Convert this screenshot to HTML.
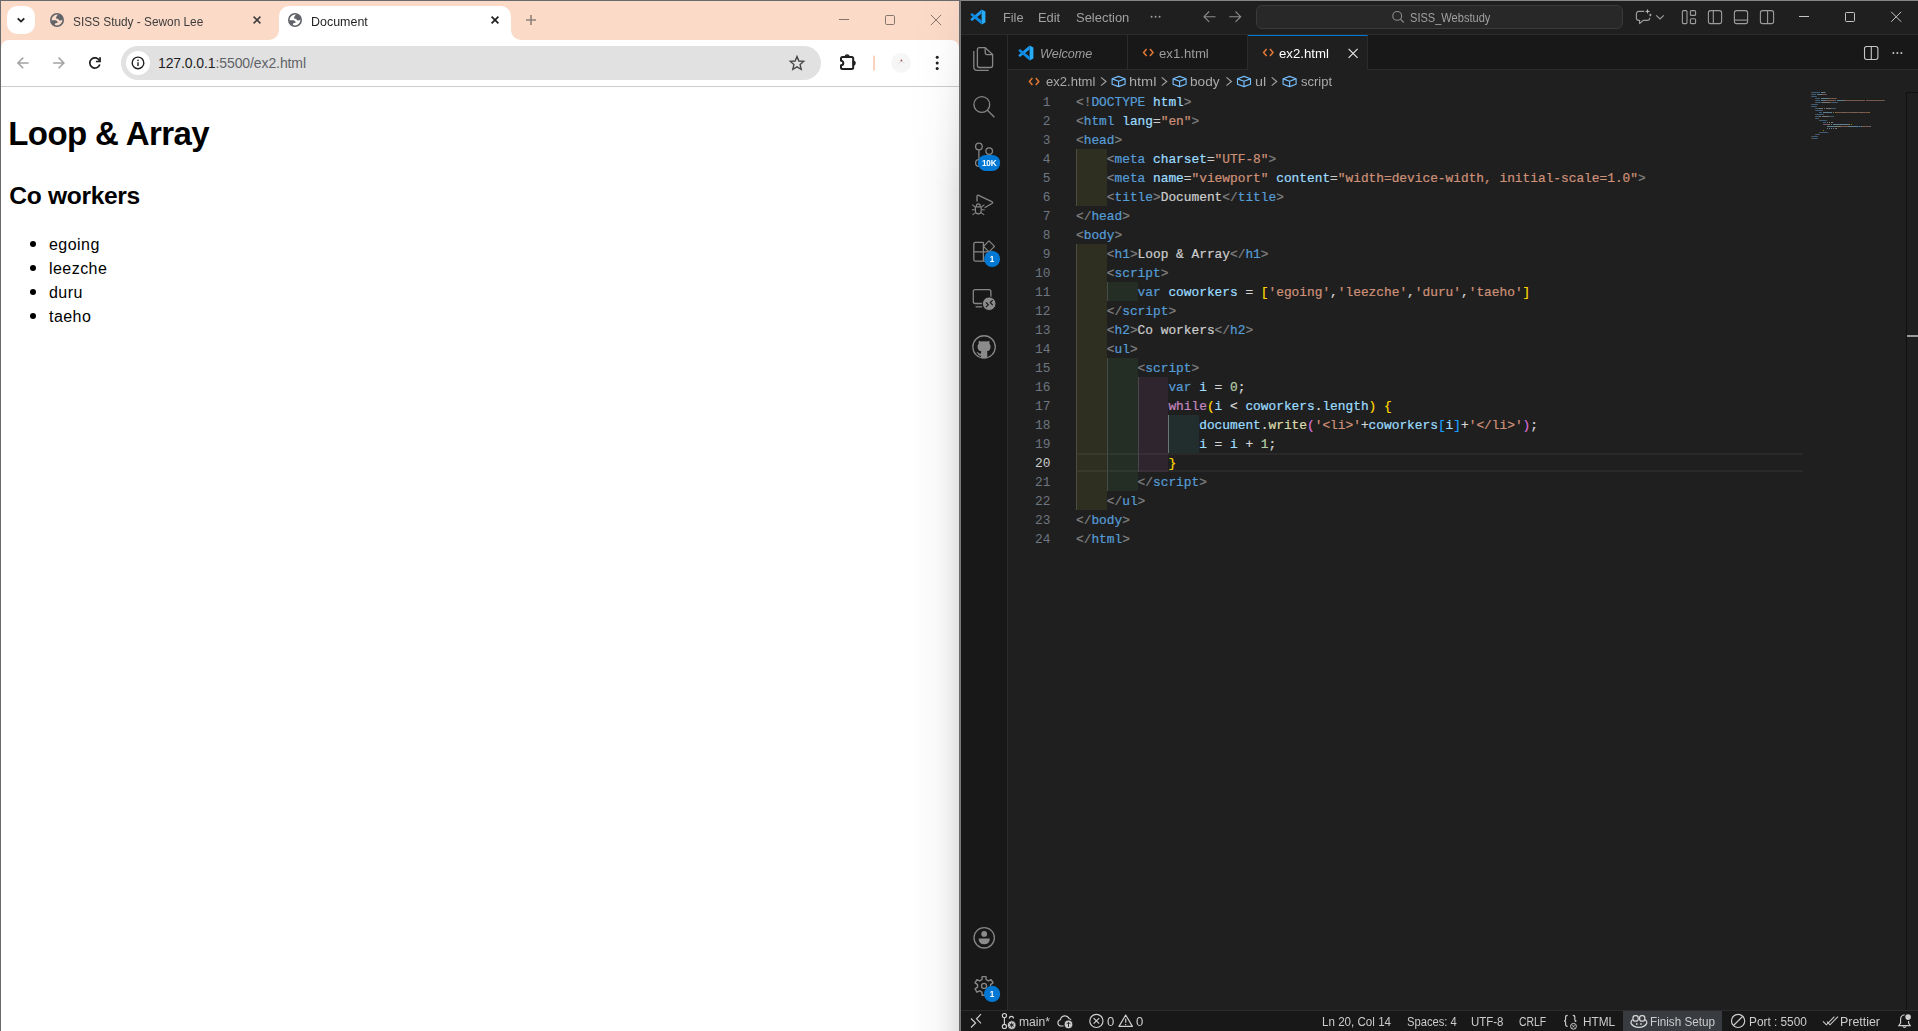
<!DOCTYPE html>
<html lang="en">
<head>
<meta charset="UTF-8">
<title>Document</title>
<style>
html,body{margin:0;padding:0}
body{width:1918px;height:1031px;position:relative;overflow:hidden;background:#1f1f1f;font-family:"Liberation Sans",sans-serif}
*{box-sizing:border-box}
.abs{position:absolute}
svg{position:absolute;overflow:visible}
/* ---------- Chrome window ---------- */
#chrome{position:absolute;left:0;top:0;width:960px;height:1031px;background:#fff;overflow:hidden}
#tabstrip{position:absolute;left:0;top:0;width:960px;height:52px;background:#fbdac8}
#ch-top{position:absolute;left:0;top:0;width:960px;height:1px;background:#676b6e}
#ch-left{position:absolute;left:0;top:0;width:1px;height:1031px;background:#676b6e}
#tabsearch{position:absolute;left:7px;top:6px;width:28px;height:28px;border-radius:10px;background:#fff}
.tabtitle{position:absolute;top:13px;font-size:12px;line-height:16px;color:#3b3b3b;white-space:pre}
#toolbar{position:absolute;left:1px;top:40px;width:958px;height:46px;background:#fff;border-radius:8px 8px 0 0}
#tb-border{position:absolute;left:1px;top:86px;width:959px;height:1px;background:#cccecd}
#omni{position:absolute;left:121px;top:46px;width:700px;height:34px;border-radius:17px;background:#e1e1e1}
#omni-ic{position:absolute;left:125.8px;top:50.8px;width:24px;height:24px;border-radius:12px;background:#fff}
#url{position:absolute;left:158px;top:55.2px;font-size:14px;line-height:17px;color:#5f6368;white-space:pre;letter-spacing:-0.1px}
#url b{font-weight:normal;color:#1f1f1f}
#page{position:absolute;left:1px;top:87px;width:959px;height:944px;background:#fff;color:#000}
#page h1{position:absolute;left:7.3px;top:28.1px;margin:0;font-size:33px;line-height:37px;font-weight:bold;white-space:pre;letter-spacing:-0.6px}
#page h2{position:absolute;left:8.3px;top:94.6px;margin:0;font-size:24.6px;line-height:28px;font-weight:bold;white-space:pre;letter-spacing:-0.33px}
#page ul{position:absolute;left:9px;top:145.7px;margin:0;padding:0 0 0 39px;font-size:16px;line-height:24px;list-style:none;letter-spacing:0.45px}
#page li{position:relative;height:24px;white-space:pre}
#page li:before{content:"";position:absolute;left:-19px;top:8.2px;width:6px;height:6px;border-radius:3px;background:#000}
/* ---------- VS Code window ---------- */
#vs-edge{position:absolute;left:959px;top:0;width:2px;height:1031px;background:linear-gradient(to right,#676b6e 0,#676b6e 1px,#7a7a7a 1px,#7a7a7a 2px)}
#vs-top{position:absolute;left:961px;top:0;width:957px;height:1px;background:#858585}
#vscode{position:absolute;left:961px;top:1px;width:957px;height:1030px;background:#1f1f1f;color:#ccc;font-size:13px}
#titlebar{position:absolute;left:0;top:0;width:957px;height:33px;background:#1f1f1f}
#tb-line{position:absolute;left:0;top:33px;width:957px;height:1px;background:#2b2b2b}
.menu{position:absolute;top:8px;font-size:13px;line-height:16px;color:#9d9d9d;white-space:pre}
#cmdcenter{position:absolute;left:295px;top:4px;width:367px;height:24px;border-radius:6px;background:#282828;border:1px solid #3a3a3a}
#cmdtext{position:absolute;left:449px;top:8px;font-size:12.4px;line-height:16px;color:#9d9d9d;white-space:pre}
#actbar{position:absolute;left:0;top:34px;width:46px;height:975px;background:#181818}
#act-line{position:absolute;left:46px;top:34px;width:1px;height:975px;background:#2b2b2b}
#tabbar{position:absolute;left:47px;top:34px;width:910px;height:35px;background:#181818;border-bottom:1px solid #2b2b2b}
.vtab{position:absolute;top:0;height:35px;width:120px;border-right:1px solid #2b2b2b;font-size:13px;line-height:16px;color:#9d9d9d}
.vtab span{position:absolute;top:10px;white-space:pre}
.vtab.on{background:#1f1f1f;border-top:1px solid #0078d4;color:#fff;height:36px}
#crumbs{position:absolute;left:47px;top:69px;width:910px;height:22px;background:#1f1f1f}
.cr{position:absolute;top:3px;font-size:13px;line-height:16px;color:#a9a9a9;white-space:pre}
#statusbar{position:absolute;left:0;top:1010px;width:957px;height:20px;background:#181818}
#st-line{position:absolute;left:0;top:1009px;width:957px;height:1px;background:#2b2b2b}
.st{position:absolute;top:4px;font-size:12px;line-height:15px;color:#ccc;white-space:pre}
.badge{position:absolute;background:#0078d4;color:#fff;font-size:9px;font-weight:bold;line-height:16px;height:16px;border-radius:8px;text-align:center}
/* ---------- editor ---------- */
#editor{position:absolute;left:0;top:0;width:1918px;height:1031px;pointer-events:none}
.ln{position:absolute;left:1008px;width:42.5px;height:19px;text-align:right;font-family:"Liberation Mono",monospace;font-size:12.83px;line-height:19px;color:#6e7681}
.ln.cur{color:#ccc}
.cl{position:absolute;height:19px;font-family:"Liberation Mono",monospace;font-size:12.83px;line-height:19px;white-space:pre;letter-spacing:0;-webkit-text-stroke:0.22px}
.ib{position:absolute;width:30.8px;height:19px}
.ig{position:absolute;width:1px;height:19px;background:#404040}
.ig.act{background:#6c6c6c}
.curline{position:absolute;left:1076px;width:727px;height:19px;border-top:2px solid #292929;border-bottom:2px solid #292929}
#minimap{position:absolute;left:0;top:0;width:1918px;height:200px;opacity:.5}
#minimap i{position:absolute;height:1.25px}
#ch-shadow{position:absolute;left:909px;top:1px;width:50px;height:1030px;background:linear-gradient(to right,rgba(0,0,0,0) 0%,rgba(0,0,0,0.02) 50%,rgba(0,0,0,0.052) 75%,rgba(0,0,0,0.115) 100%);-webkit-mask-image:linear-gradient(to bottom,rgba(0,0,0,0.15) 0,rgba(0,0,0,0.3) 40px,rgba(0,0,0,1) 190px);mask-image:linear-gradient(to bottom,rgba(0,0,0,0.15) 0,rgba(0,0,0,0.3) 40px,rgba(0,0,0,1) 190px)}
.tx{position:absolute;white-space:pre;line-height:16px;transform-origin:0 50%;font-family:"Liberation Sans",sans-serif}
#finish{position:absolute;left:662px;top:0;width:99px;height:20px;background:#383b40}
.badgetx{position:absolute;height:16px;line-height:16px;text-align:center;color:#fff;font-size:9.3px;font-weight:bold;font-family:"Liberation Sans",sans-serif;letter-spacing:-0.2px;transform:scaleX(0.88)}
#vscroll{position:absolute;left:945px;top:91px;width:12px;height:918px;border-left:1px solid #111;border-top:1px solid #111}
#vmark{position:absolute;left:946px;top:334px;width:11px;height:2px;background:#9a9a9a}

</style>
</head>
<body>
<div id="chrome">
<div id="tabstrip"></div>
<div id="tabsearch"></div>
<div id="toolbar"></div>
<div id="tb-border"></div>
<div id="omni"></div>
<div id="omni-ic"></div>
<div id="url"><b>127.0.0.1</b>:5500/ex2.html</div>
<div id="page">
<h1>Loop &amp; Array</h1>
<h2>Co workers</h2>
<ul><li>egoing</li><li>leezche</li><li>duru</li><li>taeho</li></ul>
</div>
<svg id="chrome-ic" style="left:0;top:0" width="960" height="90" viewBox="0 0 960 90" fill="none">
<defs>
<g id="globe">
<circle cx="0" cy="0" r="6.2" stroke="#5f6368" stroke-width="1.6"/>
<path fill="#5f6368" d="M0.97,-5.51 L-0.5,-3.4 Q-1.2,-2.4 -0.8,-1.6 Q-0.3,-1 1.1,-1.2 Q1.7,0.4 3,0.5 Q4.6,0.4 5.58,-0.49 A5.6,5.6 0 0 0 0.97,-5.51 Z"/>
<path fill="#5f6368" d="M-5.6,0.2 L-1.6,0.2 Q0.4,0.6 0.7,2.2 Q0.5,3.1 -1.2,3.1 Q-2,3.3 -2.2,5.15 A5.6,5.6 0 0 1 -5.6,0.2 Z"/>
</g>
</defs>
<!-- active tab shape -->
<path d="M269,40 A10,10 0 0 0 279,30 L279,16 A10,10 0 0 1 289,6 L501,6 A10,10 0 0 1 511,16 L511,30 A10,10 0 0 0 521,40 Z" fill="#fff"/>
<!-- tab search chevron -->
<path d="M17.7,18.3 L21,21.6 L24.3,18.3" stroke="#1f1f1f" stroke-width="1.8"/>
<!-- favicons -->
<use href="#globe" x="57" y="20"/>
<use href="#globe" x="295" y="20"/>
<!-- tab close buttons -->
<path d="M253.6,16.6 L260.4,23.4 M260.4,16.6 L253.6,23.4" stroke="#3a3a3a" stroke-width="1.5"/>
<path d="M491.6,16.6 L498.4,23.4 M498.4,16.6 L491.6,23.4" stroke="#1f1f1f" stroke-width="1.7"/>
<!-- new tab -->
<path d="M526,20 L536,20 M531,15 L531,25" stroke="#8f817a" stroke-width="1.6"/>
<!-- window controls -->
<path d="M839,19.5 L849,19.5" stroke="#84766f" stroke-width="1"/>
<rect x="885.5" y="15.5" width="9" height="9" rx="1.2" stroke="#84766f" stroke-width="1"/>
<path d="M930.8,14.8 L941.2,25.2 M941.2,14.8 L930.8,25.2" stroke="#84766f" stroke-width="1"/>
<!-- back / forward -->
<path d="M28.6,62.9 L18,62.9 M23.2,57.6 L17.9,62.9 L23.2,68.2" stroke="#a3a3a3" stroke-width="1.5"/>
<path d="M53.2,62.9 L63.8,62.9 M58.6,57.6 L63.9,62.9 L58.6,68.2" stroke="#a3a3a3" stroke-width="1.5"/>
<!-- reload -->
<path d="M99.52,60.74 A5.1,5.1 0 1 0 99.78,64.39" stroke="#1f1f1f" stroke-width="1.7"/>
<path d="M100.05,57.2 L100.05,61.5 L95.9,61.5" stroke="#1f1f1f" stroke-width="1.7"/>
<!-- info icon -->
<circle cx="138" cy="62.9" r="5.8" stroke="#1f1f1f" stroke-width="1.4"/>
<path d="M138,62.2 L138,65.9" stroke="#1f1f1f" stroke-width="1.4"/>
<circle cx="138" cy="60.3" r="0.85" fill="#1f1f1f"/>
<!-- star -->
<path d="M797,56.6 L798.9,61 L803.7,61.4 L800.1,64.6 L801.2,69.3 L797,66.8 L792.8,69.3 L793.9,64.6 L790.3,61.4 L795.1,61 Z" stroke="#474747" stroke-width="1.4" stroke-linejoin="miter"/>
<!-- extensions puzzle -->
<path d="M842.5,56.9 L851.7,56.9 Q853.2,56.9 853.2,58.4 L853.2,67.4 Q853.2,68.9 851.7,68.9 L842.5,68.9 Q841,68.9 841,67.4 L841,65.3 A2.3,2.3 0 0 0 841,60.7 L841,58.4 Q841,56.9 842.5,56.9 Z" stroke="#1f1f1f" stroke-width="2" stroke-linejoin="round"/>
<path d="M845.2,56.9 A1.95,1.95 0 0 1 849.1,56.9 Z M853.2,61.1 A1.95,1.95 0 0 1 853.2,65 Z" fill="#1f1f1f" stroke="#1f1f1f" stroke-width="1.2"/>
<!-- separator -->
<rect x="873" y="55.4" width="2" height="15.4" rx="1" fill="#fbd3bd"/>
<!-- avatar -->
<circle cx="901" cy="63" r="10" fill="#f6f6f6"/>
<path d="M898.3,64.6 L901.3,61 L904.6,63.3" stroke="#c9c2c2" stroke-width="0.5"/>
<circle cx="901.4" cy="60.4" r="0.9" fill="#a05050"/>
<!-- menu dots -->
<circle cx="937.2" cy="57.3" r="1.5" fill="#1f1f1f"/>
<circle cx="937.2" cy="63" r="1.5" fill="#1f1f1f"/>
<circle cx="937.2" cy="68.6" r="1.5" fill="#1f1f1f"/>
</svg>
<div id="ch-shadow"></div>
<div id="ch-top"></div>
<div id="ch-left"></div>
</div>
<div id="vs-edge"></div>
<div id="vs-top"></div>
<div id="vscode">
<div id="titlebar"><div id="cmdcenter"></div></div>
<div id="tb-line"></div>
<div id="actbar"></div>
<div id="act-line"></div>
<div id="tabbar">
<div class="vtab" style="left:0"></div>
<div class="vtab" style="left:120px"></div>
<div class="vtab on" style="left:240px"></div>
</div>
<div id="crumbs"></div>
<div id="vscroll"></div>
<div id="vmark"></div>
<div id="st-line"></div>
<div id="statusbar"><div id="finish"></div></div>
</div>
<svg id="vs-ic" style="left:0;top:0" width="1918" height="1031" viewBox="0 0 1918 1031" fill="none">
<defs>
<g id="vslogo">
<path d="M11.6,0.6 L15.4,2.4 L15.4,13.6 L11.6,15.4 Z" fill="#27adf6"/>
<path d="M11.6,0.6 L11.6,4.4 L2,11.9 L0.5,10.7 L0.5,9.9 Z" fill="#1b9af0"/>
<path d="M11.6,15.4 L11.6,11.6 L2,4.1 L0.5,5.3 L0.5,6.1 Z" fill="#0c8ae2"/>
</g>
<g id="htmlic" stroke="#e37933" stroke-width="1.5" stroke-linejoin="miter">
<path d="M3.6,0.6 L0.6,4.1 L3.6,7.6"/><path d="M7,0.6 L10,4.1 L7,7.6"/>
</g>
<g id="cube" stroke="#75beff" stroke-width="1.15" stroke-linejoin="round">
<path d="M0.7,3.2 L7.2,0.8 L13.7,3.2 L13.7,8.6 L7.2,11 L0.7,8.6 Z"/>
<path d="M0.9,3.3 L7.2,5.6 L13.5,3.3 M7.2,5.6 L7.2,10.8"/>
</g>
<g id="chev" stroke="#a0a0a0" stroke-width="1.2"><path d="M0.6,0.5 L5.6,4.6 L0.6,8.7"/></g>
</defs>
<!-- title bar -->
<use href="#vslogo" x="970" y="9"/>
<circle cx="1151.6" cy="16.7" r="0.95" fill="#a0a0a0"/><circle cx="1155.6" cy="16.7" r="0.95" fill="#a0a0a0"/><circle cx="1159.6" cy="16.7" r="0.95" fill="#a0a0a0"/>
<path d="M1215.5,16.7 L1204,16.7 M1209.2,11.5 L1204,16.7 L1209.2,21.9" stroke="#8c8c8c" stroke-width="1.1"/>
<path d="M1229.2,16.7 L1240.7,16.7 M1235.5,11.5 L1240.7,16.7 L1235.5,21.9" stroke="#8c8c8c" stroke-width="1.1"/>
<circle cx="1397.2" cy="15.9" r="4.4" stroke="#8c8c8c" stroke-width="1.1"/><path d="M1400.4,19.1 L1403.8,22.5" stroke="#8c8c8c" stroke-width="1.1"/>
<!-- chat icon -->
<path d="M1644.2,11.4 L1638.6,11.4 A2.2,2.2 0 0 0 1636.4,13.6 L1636.4,18.2 A2.2,2.2 0 0 0 1638.6,20.4 L1639.6,20.4 L1639.6,23.6 L1643.2,20.4 L1647.4,20.4 A2.2,2.2 0 0 0 1649.6,18.2 L1649.6,17.8" stroke="#9d9d9d" stroke-width="1.15" stroke-linejoin="round"/>
<path d="M1647.5,8.7 L1648.2,10.7 L1650.2,11.4 L1648.2,12.1 L1647.5,14.1 L1646.8,12.1 L1644.8,11.4 L1646.8,10.7 Z" fill="#bdbdbd"/>
<path d="M1650.3,13.3 L1650.8,14.5 L1652,15 L1650.8,15.5 L1650.3,16.7 L1649.8,15.5 L1648.6,15 L1649.8,14.5 Z" fill="#bdbdbd"/>
<path d="M1656.2,15.3 L1660,19 L1663.8,15.3" stroke="#9d9d9d" stroke-width="1.1"/>
<!-- layout icons -->
<g stroke="#9d9d9d" stroke-width="1.1">
<rect x="1682.4" y="10.6" width="4.6" height="13" rx="1"/><rect x="1690.4" y="10.6" width="5.2" height="4.8" rx="1"/><rect x="1690.4" y="18.8" width="5.2" height="4.8" rx="1"/>
<rect x="1708.4" y="10.6" width="13.2" height="13" rx="2.2"/><path d="M1713.3,10.6 L1713.3,23.6"/>
<rect x="1734.4" y="10.6" width="13.2" height="13" rx="2.2"/><path d="M1734.4,20.1 L1747.6,20.1"/>
<rect x="1760.4" y="10.6" width="13.2" height="13" rx="2.2"/><path d="M1767.6,10.6 L1767.6,23.6"/>
</g>
<!-- window controls -->
<path d="M1799,16.5 L1809,16.5" stroke="#c4c4c4" stroke-width="1"/>
<rect x="1845.5" y="12.5" width="9" height="9" rx="0.8" stroke="#c4c4c4" stroke-width="1"/>
<path d="M1891.2,11.8 L1901.2,21.8 M1901.2,11.8 L1891.2,21.8" stroke="#c4c4c4" stroke-width="1"/>
<!-- tabs -->
<use href="#vslogo" x="1018" y="45"/>
<use href="#htmlic" x="1143" y="48.3"/>
<use href="#htmlic" x="1263" y="48.3"/>
<path d="M1348.6,48.8 L1357.6,57.8 M1357.6,48.8 L1348.6,57.8" stroke="#e4e4e4" stroke-width="1.2"/>
<g stroke="#c8c8c8" stroke-width="1.1"><rect x="1864.5" y="46.5" width="13.4" height="13" rx="2.2"/><path d="M1871.3,46.5 L1871.3,59.5"/></g>
<circle cx="1893.4" cy="52.9" r="1" fill="#c8c8c8"/><circle cx="1897.4" cy="52.9" r="1" fill="#c8c8c8"/><circle cx="1901.4" cy="52.9" r="1" fill="#c8c8c8"/>
<!-- breadcrumbs -->
<use href="#htmlic" x="1028.8" y="77.3"/>
<use href="#chev" x="1100.4" y="76.9"/><use href="#cube" x="1111.4" y="75.6"/>
<use href="#chev" x="1161.1" y="76.9"/><use href="#cube" x="1172.4" y="75.6"/>
<use href="#chev" x="1225.8" y="76.9"/><use href="#cube" x="1236.8" y="75.6"/>
<use href="#chev" x="1271.1" y="76.9"/><use href="#cube" x="1282.4" y="75.6"/>
<!-- activity bar -->
<g stroke="#868686" stroke-width="1.3" stroke-linejoin="round">
<path d="M979.4,47.7 L985.2,47.7 L992.6,54.6 L992.6,65.5 A2,2 0 0 1 990.6,67.5 L979.4,67.5 A2,2 0 0 1 977.4,65.5 L977.4,49.7 A2,2 0 0 1 979.4,47.7 Z"/>
<path d="M985.2,47.7 L985.2,52.6 A2,2 0 0 0 987.2,54.6 L992.6,54.6"/>
<path d="M973.8,51 L973.8,67 A3.3,3.3 0 0 0 977.1,70.3 L988.8,70.3"/>
<circle cx="981.8" cy="104.5" r="7.9"/><path d="M987.4,110.3 L994.4,117.2"/>
<circle cx="978.9" cy="146.5" r="3.3"/><circle cx="989.2" cy="151.1" r="3.3"/><circle cx="978.9" cy="163" r="3.3"/>
<path d="M978.9,149.8 L978.9,159.7"/><path d="M989.2,154.4 Q989.2,158.8 983.6,159.4 Q980,159.8 979.4,159.8"/>
<!-- debug -->
<path d="M977,201.5 L977,196.3 Q977,194.6 978.6,195.3 L991.8,201.6 Q993.4,202.5 992,203.5 L984.6,207.8"/>
<path d="M975.4,206.9 L981.2,206.9 L981.2,210.6 A2.9,3.3 0 0 1 975.4,210.6 Z" stroke-width="1.2"/>
<path d="M976.3,206.4 A2,2.5 0 0 1 980.3,206.4" stroke-width="1.2"/>
<path d="M975.2,207.2 L972.2,204.6 M975,209.8 L971.9,209.8 M975.6,212.6 L972.4,214.9 M981.4,207.2 L984.4,204.6 M981.6,209.8 L984.7,209.8 M981,212.6 L984.2,214.9" stroke-width="1.1"/>
<!-- extensions -->
<path d="M983.4,242.3 L975.4,242.3 A1.6,1.6 0 0 0 973.8,243.9 L973.8,259.6 A1.6,1.6 0 0 0 975.4,261.2 L991.4,261.2 A1.6,1.6 0 0 0 993,259.6 L993,251.8 L973.8,251.8 M983.4,242.3 L983.4,261.2"/>
<path d="M989,240.9 L994.5,246.4 L989,251.9 L983.5,246.4 Z"/>
<!-- remote explorer -->
<path d="M982.5,303.5 L975.2,303.5 A1.9,1.9 0 0 1 973.3,301.6 L973.3,291.6 A1.9,1.9 0 0 1 975.2,289.7 L989,289.7 A1.9,1.9 0 0 1 990.9,291.6 L990.9,297"/>
<path d="M975.6,306.8 L982.2,306.8"/>
<!-- github ring -->
<circle cx="984.05" cy="346.95" r="11.2"/>
<!-- account -->
<circle cx="984.2" cy="937.8" r="10.2"/>
<!-- gear -->
<path d="M986.19,979.66 L985.94,976.59 L982.16,976.59 L981.91,979.66 L979.71,980.93 L976.93,979.61 L975.04,982.88 L977.57,984.63 L977.57,987.17 L975.04,988.92 L976.93,992.19 L979.71,990.87 L981.91,992.14 L982.16,995.21 L985.94,995.21 L986.19,992.14 L988.39,990.87 L991.17,992.19 L993.06,988.92 L990.53,987.17 L990.53,984.63 L993.06,982.88 L991.17,979.61 L988.39,980.93 Z" stroke-width="1.4"/>
<circle cx="984.05" cy="985.9" r="2.5" stroke-width="1.3"/>
</g>
<!-- remote explorer overlay -->
<circle cx="989.2" cy="303.7" r="6.8" fill="#8b8b8b" stroke="#181818" stroke-width="1"/>
<path d="M985.9,302.4 L988.3,304.8 L985.9,307.2 M992.7,300.2 L990.3,302.6 L992.7,305" stroke="#181818" stroke-width="1.2"/>
<!-- github cat -->
<g fill="#8b8b8b">
<path d="M978.9,340.7 L981,341.6 Q984.05,340.9 987.1,341.6 L989.2,340.7 Q989.7,342.4 989.4,343.4 Q990.8,344.9 990.6,347 Q990.2,350.9 986.9,351.3 Q987.3,352 987.3,353 L987.3,357.6 Q984,358.6 980.9,357.6 L980.9,355.6 Q978.4,356 977.6,353.6 Q977.2,352.6 976.4,352 Q977.4,351.6 978.2,352.6 Q979.2,354.2 980.9,353.6 Q981,352 981.3,351.3 Q977.9,350.9 977.5,347 Q977.3,344.9 978.7,343.4 Q978.4,342.4 978.9,340.7 Z"/>
<!-- account person -->
<circle cx="984.2" cy="933.9" r="2.9"/>
<path d="M978.6,938.4 L989.8,938.4 Q989.8,944.2 984.2,944.2 Q978.6,944.2 978.6,938.4 Z"/>
</g>
<!-- badges -->
<rect x="977.9" y="155" width="22.3" height="16" rx="8" fill="#0078d4"/>
<circle cx="992.1" cy="259" r="8" fill="#0078d4"/>
<circle cx="992.1" cy="993.9" r="8.1" fill="#0078d4"/>
<!-- status bar icons -->
<g stroke="#d0d0d0" stroke-width="1.15">
<path d="M971,1018.5 L975.6,1023 L971,1027.5 M981,1014.2 L976.5,1018.8 L981,1023.4"/>
<circle cx="1004.4" cy="1015.6" r="2.1"/><circle cx="1004.4" cy="1026.4" r="2.1"/><path d="M1004.4,1017.7 L1004.4,1024.3"/>
<path d="M1009.3,1018.4 A2.1,2.1 0 1 1 1013.5,1018.4"/>
<!-- cloud -->
<path d="M1063.6,1026 L1060.8,1026 A3.2,3.2 0 0 1 1060.4,1019.7 A4.6,4.6 0 0 1 1069.2,1018.8 Q1070.4,1019 1071.2,1019.8"/>
<!-- error -->
<circle cx="1096.4" cy="1020.9" r="6.6"/><path d="M1093.6,1018.1 L1099.2,1023.7 M1099.2,1018.1 L1093.6,1023.7"/>
<!-- warning -->
<path d="M1125.7,1015 L1132.4,1026.4 L1119,1026.4 Z" stroke-linejoin="round"/><path d="M1125.7,1018.8 L1125.7,1022.8 M1125.7,1023.9 L1125.7,1025.1"/>
<!-- braces -->
<path d="M1567.6,1015.4 Q1565.6,1015.4 1565.6,1017.2 L1565.6,1019.4 Q1565.6,1020.9 1564,1020.9 Q1565.6,1020.9 1565.6,1022.4 L1565.6,1024.6 Q1565.6,1026.4 1567.6,1026.4"/>
<path d="M1572.8,1015.4 Q1574.8,1015.4 1574.8,1017.2 L1574.8,1019.4 Q1574.8,1020.9 1576.4,1020.9 Q1575.4,1020.9 1575,1021.6"/>
<!-- no-entry -->
<circle cx="1738.1" cy="1020.9" r="6.6"/><path d="M1733.5,1025.5 L1742.7,1016.3"/>
<!-- double check -->
<path d="M1823,1021.4 L1826.4,1024.8 L1834.4,1016.6 M1827,1021.6 L1830,1024.8 L1838,1016.6" stroke-width="1.05"/>
<!-- bell -->
<path d="M1904.6,1014.8 A4.2,4.2 0 0 0 1900.6,1019 L1900.6,1023 L1898.8,1025.6 L1910.2,1025.6 L1908.6,1023 L1908.6,1021"/>
<path d="M1903,1026.4 A1.6,1.6 0 0 0 1906,1026.4"/>
</g>
<circle cx="1011.7" cy="1025.1" r="4.3" fill="#d0d0d0" stroke="#181818" stroke-width="0.8"/>
<path d="M1011.7,1022.6 L1011.7,1027.6 M1009.5,1023.8 L1013.9,1026.4 M1013.9,1023.8 L1009.5,1026.4" stroke="#181818" stroke-width="0.9"/>
<circle cx="1068.5" cy="1024.4" r="4.3" fill="#d0d0d0" stroke="#181818" stroke-width="0.8"/>
<path d="M1068.5,1027 L1068.5,1022.4 M1066.5,1024.2 L1068.5,1022.2 L1070.5,1024.2" stroke="#181818" stroke-width="0.9"/>
<circle cx="1573.5" cy="1026.3" r="2.9" fill="#181818" stroke="#d0d0d0" stroke-width="1"/>
<path d="M1572.3,1025.1 L1574.7,1027.5 M1574.7,1025.1 L1572.3,1027.5" stroke="#d0d0d0" stroke-width="0.8"/>
<circle cx="1908.1" cy="1017.1" r="2.8" fill="#d0d0d0"/>
<!-- copilot -->
<g stroke="#d8d8d8" stroke-width="1.2">
<rect x="1633" y="1015.6" width="5.2" height="5.6" rx="2.2"/><rect x="1639.6" y="1015.6" width="5.2" height="5.6" rx="2.2"/>
<path d="M1632.6,1019.6 Q1630.6,1021 1631,1023.4 Q1633.4,1027.4 1638.9,1027.4 Q1644.4,1027.4 1646.8,1023.4 Q1647.2,1021 1645.2,1019.6"/>
<path d="M1636.8,1023 L1636.8,1025 M1641,1023 L1641,1025"/>
</g>
</svg>
<div class="badgetx" style="left:977.9px;top:155px;width:22.3px">10K</div>
<div class="badgetx" style="left:984.1px;top:251px;width:16px">1</div>
<div class="badgetx" style="left:984.1px;top:985.9px;width:16px">1</div>
<div class="tx" style="left:72.81px;top:14px;font-size:12px;color:#3c3c3c;transform:scaleX(0.9863);">SISS Study - Sewon Lee</div>
<div class="tx" style="left:310.66px;top:14px;font-size:12px;color:#1f1f1f;transform:scaleX(1.0381);">Document</div>
<div class="tx" style="left:1002.52px;top:10px;font-size:13px;color:#a0a0a0;transform:scaleX(0.9795);">File</div>
<div class="tx" style="left:1037.71px;top:10px;font-size:13px;color:#a0a0a0;transform:scaleX(0.9907);">Edit</div>
<div class="tx" style="left:1076.00px;top:10px;font-size:13px;color:#a0a0a0;transform:scaleX(0.9971);">Selection</div>
<div class="tx" style="left:1410.44px;top:10px;font-size:12px;color:#a0a0a0;transform:scaleX(0.9222);">SISS_Webstudy</div>
<div class="tx" style="left:1039.63px;top:46px;font-size:13px;color:#9d9d9d;transform:scaleX(0.9695);font-style:italic">Welcome</div>
<div class="tx" style="left:1159.49px;top:46px;font-size:13px;color:#9d9d9d;transform:scaleX(1.0136);">ex1.html</div>
<div class="tx" style="left:1279.49px;top:46px;font-size:13px;color:#ffffff;transform:scaleX(1.0157);">ex2.html</div>
<div class="tx" style="left:1045.50px;top:74px;font-size:13px;color:#a9a9a9;transform:scaleX(1.0052);">ex2.html</div>
<div class="tx" style="left:1128.96px;top:74px;font-size:13px;color:#a9a9a9;transform:scaleX(1.1174);">html</div>
<div class="tx" style="left:1190.41px;top:74px;font-size:13px;color:#a9a9a9;transform:scaleX(1.0473);">body</div>
<div class="tx" style="left:1254.77px;top:74px;font-size:13px;color:#a9a9a9;transform:scaleX(1.1059);">ul</div>
<div class="tx" style="left:1300.95px;top:74px;font-size:13px;color:#a9a9a9;transform:scaleX(0.9984);">script</div>
<div class="tx" style="left:1019.24px;top:1014px;font-size:12px;color:#cccccc;transform:scaleX(1.0084);">main*</div>
<div class="tx" style="left:1107.05px;top:1014px;font-size:12px;color:#cccccc;transform:scaleX(1.0957);">0</div>
<div class="tx" style="left:1136.45px;top:1014px;font-size:12px;color:#cccccc;transform:scaleX(1.0957);">0</div>
<div class="tx" style="left:1322.33px;top:1014px;font-size:12px;color:#cccccc;transform:scaleX(0.9671);">Ln 20, Col 14</div>
<div class="tx" style="left:1406.53px;top:1014px;font-size:12px;color:#cccccc;transform:scaleX(0.9333);">Spaces: 4</div>
<div class="tx" style="left:1471.28px;top:1014px;font-size:12px;color:#cccccc;transform:scaleX(0.9557);">UTF-8</div>
<div class="tx" style="left:1518.57px;top:1014px;font-size:12px;color:#cccccc;transform:scaleX(0.8689);">CRLF</div>
<div class="tx" style="left:1582.52px;top:1014px;font-size:12px;color:#cccccc;transform:scaleX(0.9841);">HTML</div>
<div class="tx" style="left:1649.53px;top:1014px;font-size:12px;color:#cccccc;transform:scaleX(0.9732);">Finish Setup</div>
<div class="tx" style="left:1748.51px;top:1014px;font-size:12px;color:#cccccc;transform:scaleX(0.9852);">Port : 5500</div>
<div class="tx" style="left:1840.27px;top:1014px;font-size:12px;color:#cccccc;transform:scaleX(1.0320);">Prettier</div>
<div id="editor">
<div class="curline" style="top:453px"></div>
<i class="ig" style="left:1076px;top:149px"></i><i class="ig" style="left:1076px;top:168px"></i><i class="ig" style="left:1076px;top:187px"></i><i class="ig" style="left:1076px;top:244px"></i><i class="ig" style="left:1076px;top:263px"></i><i class="ig" style="left:1076px;top:282px"></i><i class="ig" style="left:1107px;top:282px"></i><i class="ig" style="left:1076px;top:301px"></i><i class="ig" style="left:1076px;top:320px"></i><i class="ig" style="left:1076px;top:339px"></i><i class="ig" style="left:1076px;top:358px"></i><i class="ig" style="left:1107px;top:358px"></i><i class="ig" style="left:1076px;top:377px"></i><i class="ig" style="left:1107px;top:377px"></i><i class="ig" style="left:1138px;top:377px"></i><i class="ig" style="left:1076px;top:396px"></i><i class="ig" style="left:1107px;top:396px"></i><i class="ig" style="left:1138px;top:396px"></i><i class="ig" style="left:1076px;top:415px"></i><i class="ig" style="left:1107px;top:415px"></i><i class="ig" style="left:1138px;top:415px"></i><i class="ig act" style="left:1168px;top:415px"></i><i class="ig" style="left:1076px;top:434px"></i><i class="ig" style="left:1107px;top:434px"></i><i class="ig" style="left:1138px;top:434px"></i><i class="ig act" style="left:1168px;top:434px"></i><i class="ig" style="left:1076px;top:453px"></i><i class="ig" style="left:1107px;top:453px"></i><i class="ig" style="left:1138px;top:453px"></i><i class="ig" style="left:1076px;top:472px"></i><i class="ig" style="left:1107px;top:472px"></i><i class="ig" style="left:1076px;top:491px"></i>
<i class="ib" style="left:1076.0px;top:149px;background:rgba(255,255,64,0.07)"></i><i class="ib" style="left:1076.0px;top:168px;background:rgba(255,255,64,0.07)"></i><i class="ib" style="left:1076.0px;top:187px;background:rgba(255,255,64,0.07)"></i><i class="ib" style="left:1076.0px;top:244px;background:rgba(255,255,64,0.07)"></i><i class="ib" style="left:1076.0px;top:263px;background:rgba(255,255,64,0.07)"></i><i class="ib" style="left:1076.0px;top:282px;background:rgba(255,255,64,0.07)"></i><i class="ib" style="left:1106.8px;top:282px;background:rgba(127,255,127,0.07)"></i><i class="ib" style="left:1076.0px;top:301px;background:rgba(255,255,64,0.07)"></i><i class="ib" style="left:1076.0px;top:320px;background:rgba(255,255,64,0.07)"></i><i class="ib" style="left:1076.0px;top:339px;background:rgba(255,255,64,0.07)"></i><i class="ib" style="left:1076.0px;top:358px;background:rgba(255,255,64,0.07)"></i><i class="ib" style="left:1106.8px;top:358px;background:rgba(127,255,127,0.07)"></i><i class="ib" style="left:1076.0px;top:377px;background:rgba(255,255,64,0.07)"></i><i class="ib" style="left:1106.8px;top:377px;background:rgba(127,255,127,0.07)"></i><i class="ib" style="left:1137.6px;top:377px;background:rgba(255,127,255,0.07)"></i><i class="ib" style="left:1076.0px;top:396px;background:rgba(255,255,64,0.07)"></i><i class="ib" style="left:1106.8px;top:396px;background:rgba(127,255,127,0.07)"></i><i class="ib" style="left:1137.6px;top:396px;background:rgba(255,127,255,0.07)"></i><i class="ib" style="left:1076.0px;top:415px;background:rgba(255,255,64,0.07)"></i><i class="ib" style="left:1106.8px;top:415px;background:rgba(127,255,127,0.07)"></i><i class="ib" style="left:1137.6px;top:415px;background:rgba(255,127,255,0.07)"></i><i class="ib" style="left:1168.4px;top:415px;background:rgba(79,236,236,0.07)"></i><i class="ib" style="left:1076.0px;top:434px;background:rgba(255,255,64,0.07)"></i><i class="ib" style="left:1106.8px;top:434px;background:rgba(127,255,127,0.07)"></i><i class="ib" style="left:1137.6px;top:434px;background:rgba(255,127,255,0.07)"></i><i class="ib" style="left:1168.4px;top:434px;background:rgba(79,236,236,0.07)"></i><i class="ib" style="left:1076.0px;top:453px;background:rgba(255,255,64,0.07)"></i><i class="ib" style="left:1106.8px;top:453px;background:rgba(127,255,127,0.07)"></i><i class="ib" style="left:1137.6px;top:453px;background:rgba(255,127,255,0.07)"></i><i class="ib" style="left:1076.0px;top:472px;background:rgba(255,255,64,0.07)"></i><i class="ib" style="left:1106.8px;top:472px;background:rgba(127,255,127,0.07)"></i><i class="ib" style="left:1076.0px;top:491px;background:rgba(255,255,64,0.07)"></i>
<div class="ln" style="top:93px">1</div><div class="cl" style="top:93px;left:1076.0px"><span style="color:#808080">&lt;!</span><span style="color:#569cd6">DOCTYPE</span><span style="color:#cccccc"> </span><span style="color:#9cdcfe">html</span><span style="color:#808080">&gt;</span></div>
<div class="ln" style="top:112px">2</div><div class="cl" style="top:112px;left:1076.0px"><span style="color:#808080">&lt;</span><span style="color:#569cd6">html</span><span style="color:#cccccc"> </span><span style="color:#9cdcfe">lang</span><span style="color:#cccccc">=</span><span style="color:#ce9178">"en"</span><span style="color:#808080">&gt;</span></div>
<div class="ln" style="top:131px">3</div><div class="cl" style="top:131px;left:1076.0px"><span style="color:#808080">&lt;</span><span style="color:#569cd6">head</span><span style="color:#808080">&gt;</span></div>
<div class="ln" style="top:150px">4</div><div class="cl" style="top:150px;left:1106.8px"><span style="color:#808080">&lt;</span><span style="color:#569cd6">meta</span><span style="color:#cccccc"> </span><span style="color:#9cdcfe">charset</span><span style="color:#cccccc">=</span><span style="color:#ce9178">"UTF-8"</span><span style="color:#808080">&gt;</span></div>
<div class="ln" style="top:169px">5</div><div class="cl" style="top:169px;left:1106.8px"><span style="color:#808080">&lt;</span><span style="color:#569cd6">meta</span><span style="color:#cccccc"> </span><span style="color:#9cdcfe">name</span><span style="color:#cccccc">=</span><span style="color:#ce9178">"viewport"</span><span style="color:#cccccc"> </span><span style="color:#9cdcfe">content</span><span style="color:#cccccc">=</span><span style="color:#ce9178">"width=device-width, initial-scale=1.0"</span><span style="color:#808080">&gt;</span></div>
<div class="ln" style="top:188px">6</div><div class="cl" style="top:188px;left:1106.8px"><span style="color:#808080">&lt;</span><span style="color:#569cd6">title</span><span style="color:#808080">&gt;</span><span style="color:#cccccc">Document</span><span style="color:#808080">&lt;/</span><span style="color:#569cd6">title</span><span style="color:#808080">&gt;</span></div>
<div class="ln" style="top:207px">7</div><div class="cl" style="top:207px;left:1076.0px"><span style="color:#808080">&lt;/</span><span style="color:#569cd6">head</span><span style="color:#808080">&gt;</span></div>
<div class="ln" style="top:226px">8</div><div class="cl" style="top:226px;left:1076.0px"><span style="color:#808080">&lt;</span><span style="color:#569cd6">body</span><span style="color:#808080">&gt;</span></div>
<div class="ln" style="top:245px">9</div><div class="cl" style="top:245px;left:1106.8px"><span style="color:#808080">&lt;</span><span style="color:#569cd6">h1</span><span style="color:#808080">&gt;</span><span style="color:#cccccc">Loop &amp; Array</span><span style="color:#808080">&lt;/</span><span style="color:#569cd6">h1</span><span style="color:#808080">&gt;</span></div>
<div class="ln" style="top:264px">10</div><div class="cl" style="top:264px;left:1106.8px"><span style="color:#808080">&lt;</span><span style="color:#569cd6">script</span><span style="color:#808080">&gt;</span></div>
<div class="ln" style="top:283px">11</div><div class="cl" style="top:283px;left:1137.6px"><span style="color:#569cd6">var</span><span style="color:#d4d4d4"> </span><span style="color:#9cdcfe">coworkers</span><span style="color:#d4d4d4"> = </span><span style="color:#ffd700">[</span><span style="color:#ce9178">'egoing'</span><span style="color:#d4d4d4">,</span><span style="color:#ce9178">'leezche'</span><span style="color:#d4d4d4">,</span><span style="color:#ce9178">'duru'</span><span style="color:#d4d4d4">,</span><span style="color:#ce9178">'taeho'</span><span style="color:#ffd700">]</span></div>
<div class="ln" style="top:302px">12</div><div class="cl" style="top:302px;left:1106.8px"><span style="color:#808080">&lt;/</span><span style="color:#569cd6">script</span><span style="color:#808080">&gt;</span></div>
<div class="ln" style="top:321px">13</div><div class="cl" style="top:321px;left:1106.8px"><span style="color:#808080">&lt;</span><span style="color:#569cd6">h2</span><span style="color:#808080">&gt;</span><span style="color:#cccccc">Co workers</span><span style="color:#808080">&lt;/</span><span style="color:#569cd6">h2</span><span style="color:#808080">&gt;</span></div>
<div class="ln" style="top:340px">14</div><div class="cl" style="top:340px;left:1106.8px"><span style="color:#808080">&lt;</span><span style="color:#569cd6">ul</span><span style="color:#808080">&gt;</span></div>
<div class="ln" style="top:359px">15</div><div class="cl" style="top:359px;left:1137.6px"><span style="color:#808080">&lt;</span><span style="color:#569cd6">script</span><span style="color:#808080">&gt;</span></div>
<div class="ln" style="top:378px">16</div><div class="cl" style="top:378px;left:1168.4px"><span style="color:#569cd6">var</span><span style="color:#d4d4d4"> </span><span style="color:#9cdcfe">i</span><span style="color:#d4d4d4"> = </span><span style="color:#b5cea8">0</span><span style="color:#d4d4d4">;</span></div>
<div class="ln" style="top:397px">17</div><div class="cl" style="top:397px;left:1168.4px"><span style="color:#c586c0">while</span><span style="color:#ffd700">(</span><span style="color:#9cdcfe">i</span><span style="color:#d4d4d4"> &lt; </span><span style="color:#9cdcfe">coworkers</span><span style="color:#d4d4d4">.</span><span style="color:#9cdcfe">length</span><span style="color:#ffd700">)</span><span style="color:#d4d4d4"> </span><span style="color:#ffd700">{</span></div>
<div class="ln" style="top:416px">18</div><div class="cl" style="top:416px;left:1199.2px"><span style="color:#9cdcfe">document</span><span style="color:#d4d4d4">.</span><span style="color:#dcdcaa">write</span><span style="color:#da70d6">(</span><span style="color:#ce9178">'&lt;li&gt;'</span><span style="color:#d4d4d4">+</span><span style="color:#9cdcfe">coworkers</span><span style="color:#179fff">[</span><span style="color:#9cdcfe">i</span><span style="color:#179fff">]</span><span style="color:#d4d4d4">+</span><span style="color:#ce9178">'&lt;/li&gt;'</span><span style="color:#da70d6">)</span><span style="color:#d4d4d4">;</span></div>
<div class="ln" style="top:435px">19</div><div class="cl" style="top:435px;left:1199.2px"><span style="color:#9cdcfe">i</span><span style="color:#d4d4d4"> = </span><span style="color:#9cdcfe">i</span><span style="color:#d4d4d4"> + </span><span style="color:#b5cea8">1</span><span style="color:#d4d4d4">;</span></div>
<div class="ln cur" style="top:454px">20</div><div class="cl" style="top:454px;left:1168.4px"><span style="color:#ffd700">}</span></div>
<div class="ln" style="top:473px">21</div><div class="cl" style="top:473px;left:1137.6px"><span style="color:#808080">&lt;/</span><span style="color:#569cd6">script</span><span style="color:#808080">&gt;</span></div>
<div class="ln" style="top:492px">22</div><div class="cl" style="top:492px;left:1106.8px"><span style="color:#808080">&lt;/</span><span style="color:#569cd6">ul</span><span style="color:#808080">&gt;</span></div>
<div class="ln" style="top:511px">23</div><div class="cl" style="top:511px;left:1076.0px"><span style="color:#808080">&lt;/</span><span style="color:#569cd6">body</span><span style="color:#808080">&gt;</span></div>
<div class="ln" style="top:530px">24</div><div class="cl" style="top:530px;left:1076.0px"><span style="color:#808080">&lt;/</span><span style="color:#569cd6">html</span><span style="color:#808080">&gt;</span></div>
</div>
<div id="minimap">
<i style="left:1811px;top:92px;width:2px;background:#808080"></i><i style="left:1813px;top:92px;width:7px;background:#569cd6"></i><i style="left:1821px;top:92px;width:4px;background:#9cdcfe"></i><i style="left:1825px;top:92px;width:1px;background:#808080"></i><i style="left:1811px;top:94px;width:1px;background:#808080"></i><i style="left:1812px;top:94px;width:4px;background:#569cd6"></i><i style="left:1817px;top:94px;width:4px;background:#9cdcfe"></i><i style="left:1821px;top:94px;width:1px;background:#cccccc"></i><i style="left:1822px;top:94px;width:4px;background:#ce9178"></i><i style="left:1826px;top:94px;width:1px;background:#808080"></i><i style="left:1811px;top:96px;width:1px;background:#808080"></i><i style="left:1812px;top:96px;width:4px;background:#569cd6"></i><i style="left:1816px;top:96px;width:1px;background:#808080"></i><i style="left:1815px;top:98px;width:1px;background:#808080"></i><i style="left:1816px;top:98px;width:4px;background:#569cd6"></i><i style="left:1821px;top:98px;width:7px;background:#9cdcfe"></i><i style="left:1828px;top:98px;width:1px;background:#cccccc"></i><i style="left:1829px;top:98px;width:7px;background:#ce9178"></i><i style="left:1836px;top:98px;width:1px;background:#808080"></i><i style="left:1815px;top:100px;width:1px;background:#808080"></i><i style="left:1816px;top:100px;width:4px;background:#569cd6"></i><i style="left:1821px;top:100px;width:4px;background:#9cdcfe"></i><i style="left:1825px;top:100px;width:1px;background:#cccccc"></i><i style="left:1826px;top:100px;width:10px;background:#ce9178"></i><i style="left:1837px;top:100px;width:7px;background:#9cdcfe"></i><i style="left:1844px;top:100px;width:1px;background:#cccccc"></i><i style="left:1845px;top:100px;width:20px;background:#ce9178"></i><i style="left:1866px;top:100px;width:18px;background:#ce9178"></i><i style="left:1884px;top:100px;width:1px;background:#808080"></i><i style="left:1815px;top:102px;width:1px;background:#808080"></i><i style="left:1816px;top:102px;width:5px;background:#569cd6"></i><i style="left:1821px;top:102px;width:1px;background:#808080"></i><i style="left:1822px;top:102px;width:8px;background:#cccccc"></i><i style="left:1830px;top:102px;width:2px;background:#808080"></i><i style="left:1832px;top:102px;width:5px;background:#569cd6"></i><i style="left:1837px;top:102px;width:1px;background:#808080"></i><i style="left:1811px;top:104px;width:2px;background:#808080"></i><i style="left:1813px;top:104px;width:4px;background:#569cd6"></i><i style="left:1817px;top:104px;width:1px;background:#808080"></i><i style="left:1811px;top:106px;width:1px;background:#808080"></i><i style="left:1812px;top:106px;width:4px;background:#569cd6"></i><i style="left:1816px;top:106px;width:1px;background:#808080"></i><i style="left:1815px;top:108px;width:1px;background:#808080"></i><i style="left:1816px;top:108px;width:2px;background:#569cd6"></i><i style="left:1818px;top:108px;width:1px;background:#808080"></i><i style="left:1819px;top:108px;width:4px;background:#cccccc"></i><i style="left:1824px;top:108px;width:1px;background:#cccccc"></i><i style="left:1826px;top:108px;width:5px;background:#cccccc"></i><i style="left:1831px;top:108px;width:2px;background:#808080"></i><i style="left:1833px;top:108px;width:2px;background:#569cd6"></i><i style="left:1835px;top:108px;width:1px;background:#808080"></i><i style="left:1815px;top:110px;width:1px;background:#808080"></i><i style="left:1816px;top:110px;width:6px;background:#569cd6"></i><i style="left:1822px;top:110px;width:1px;background:#808080"></i><i style="left:1819px;top:112px;width:3px;background:#569cd6"></i><i style="left:1823px;top:112px;width:9px;background:#9cdcfe"></i><i style="left:1833px;top:112px;width:1px;background:#d4d4d4"></i><i style="left:1835px;top:112px;width:1px;background:#ffd700"></i><i style="left:1836px;top:112px;width:8px;background:#ce9178"></i><i style="left:1844px;top:112px;width:1px;background:#d4d4d4"></i><i style="left:1845px;top:112px;width:9px;background:#ce9178"></i><i style="left:1854px;top:112px;width:1px;background:#d4d4d4"></i><i style="left:1855px;top:112px;width:6px;background:#ce9178"></i><i style="left:1861px;top:112px;width:1px;background:#d4d4d4"></i><i style="left:1862px;top:112px;width:7px;background:#ce9178"></i><i style="left:1869px;top:112px;width:1px;background:#ffd700"></i><i style="left:1815px;top:114px;width:2px;background:#808080"></i><i style="left:1817px;top:114px;width:6px;background:#569cd6"></i><i style="left:1823px;top:114px;width:1px;background:#808080"></i><i style="left:1815px;top:116px;width:1px;background:#808080"></i><i style="left:1816px;top:116px;width:2px;background:#569cd6"></i><i style="left:1818px;top:116px;width:1px;background:#808080"></i><i style="left:1819px;top:116px;width:2px;background:#cccccc"></i><i style="left:1822px;top:116px;width:7px;background:#cccccc"></i><i style="left:1829px;top:116px;width:2px;background:#808080"></i><i style="left:1831px;top:116px;width:2px;background:#569cd6"></i><i style="left:1833px;top:116px;width:1px;background:#808080"></i><i style="left:1815px;top:118px;width:1px;background:#808080"></i><i style="left:1816px;top:118px;width:2px;background:#569cd6"></i><i style="left:1818px;top:118px;width:1px;background:#808080"></i><i style="left:1819px;top:120px;width:1px;background:#808080"></i><i style="left:1820px;top:120px;width:6px;background:#569cd6"></i><i style="left:1826px;top:120px;width:1px;background:#808080"></i><i style="left:1823px;top:122px;width:3px;background:#569cd6"></i><i style="left:1827px;top:122px;width:1px;background:#9cdcfe"></i><i style="left:1829px;top:122px;width:1px;background:#d4d4d4"></i><i style="left:1831px;top:122px;width:1px;background:#b5cea8"></i><i style="left:1832px;top:122px;width:1px;background:#d4d4d4"></i><i style="left:1823px;top:124px;width:5px;background:#c586c0"></i><i style="left:1828px;top:124px;width:1px;background:#ffd700"></i><i style="left:1829px;top:124px;width:1px;background:#9cdcfe"></i><i style="left:1831px;top:124px;width:1px;background:#d4d4d4"></i><i style="left:1833px;top:124px;width:9px;background:#9cdcfe"></i><i style="left:1842px;top:124px;width:1px;background:#d4d4d4"></i><i style="left:1843px;top:124px;width:6px;background:#9cdcfe"></i><i style="left:1849px;top:124px;width:1px;background:#ffd700"></i><i style="left:1851px;top:124px;width:1px;background:#ffd700"></i><i style="left:1827px;top:126px;width:8px;background:#9cdcfe"></i><i style="left:1835px;top:126px;width:1px;background:#d4d4d4"></i><i style="left:1836px;top:126px;width:5px;background:#dcdcaa"></i><i style="left:1841px;top:126px;width:1px;background:#da70d6"></i><i style="left:1842px;top:126px;width:6px;background:#ce9178"></i><i style="left:1848px;top:126px;width:1px;background:#d4d4d4"></i><i style="left:1849px;top:126px;width:9px;background:#9cdcfe"></i><i style="left:1858px;top:126px;width:1px;background:#179fff"></i><i style="left:1859px;top:126px;width:1px;background:#9cdcfe"></i><i style="left:1860px;top:126px;width:1px;background:#179fff"></i><i style="left:1861px;top:126px;width:1px;background:#d4d4d4"></i><i style="left:1862px;top:126px;width:7px;background:#ce9178"></i><i style="left:1869px;top:126px;width:1px;background:#da70d6"></i><i style="left:1870px;top:126px;width:1px;background:#d4d4d4"></i><i style="left:1827px;top:128px;width:1px;background:#9cdcfe"></i><i style="left:1829px;top:128px;width:1px;background:#d4d4d4"></i><i style="left:1831px;top:128px;width:1px;background:#9cdcfe"></i><i style="left:1833px;top:128px;width:1px;background:#d4d4d4"></i><i style="left:1835px;top:128px;width:1px;background:#b5cea8"></i><i style="left:1836px;top:128px;width:1px;background:#d4d4d4"></i><i style="left:1823px;top:130px;width:1px;background:#ffd700"></i><i style="left:1819px;top:132px;width:2px;background:#808080"></i><i style="left:1821px;top:132px;width:6px;background:#569cd6"></i><i style="left:1827px;top:132px;width:1px;background:#808080"></i><i style="left:1815px;top:134px;width:2px;background:#808080"></i><i style="left:1817px;top:134px;width:2px;background:#569cd6"></i><i style="left:1819px;top:134px;width:1px;background:#808080"></i><i style="left:1811px;top:136px;width:2px;background:#808080"></i><i style="left:1813px;top:136px;width:4px;background:#569cd6"></i><i style="left:1817px;top:136px;width:1px;background:#808080"></i><i style="left:1811px;top:138px;width:2px;background:#808080"></i><i style="left:1813px;top:138px;width:4px;background:#569cd6"></i><i style="left:1817px;top:138px;width:1px;background:#808080"></i>
</div>
</body>
</html>
